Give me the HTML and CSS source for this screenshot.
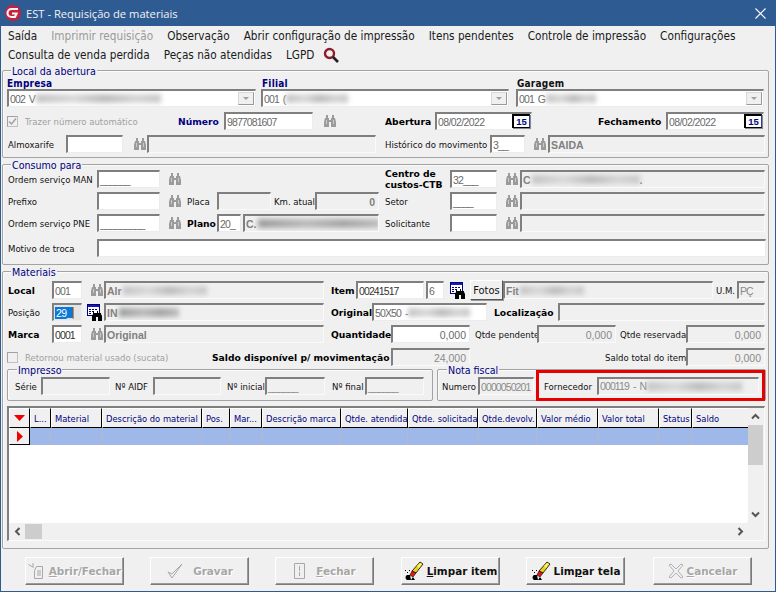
FILE: index.html
```html
<!DOCTYPE html>
<html lang="pt-BR">
<head>
<meta charset="utf-8">
<title>EST - Requisição de materiais</title>
<link rel="stylesheet" href="styles.css">
</head>
<body>
<svg class="defs" width="0" height="0">
  <symbol id="bin" viewBox="0 0 12 14">
    <path d="M2 1h2v3h1v2h2V4h1V1h2v3h1l1 4v5H7V8H5v5H0V8l1-4h1z" fill="currentColor"/>
    <path d="M2 6h1v4H2zM9 6h1v4H9z" fill="#f0f0f0" opacity=".55"/>
  </symbol>
  <symbol id="calbin" viewBox="0 0 16 17">
    <rect x=".5" y=".5" width="12" height="11" fill="#fff" stroke="#000080"/>
    <path d="M1 1h11v2H1z" fill="#1a1ab0"/>
    <path d="M2 5h2v1H2zM5 5h2v1H5zM8 5h2v1H8zM2 7h2v1H2zM5 7h2v1H5zM2 9h2v1H2z" fill="#000080"/>
    <path d="M6 7h1v2h3V7h1v2h3v1l1 2v5h-4v-4h-2v4H5v-5l1-2z" fill="#000"/>
  </symbol>
  <symbol id="eraser" viewBox="0 0 20 20">
    <path d="M12 12l7-9-3-2-8 9z" fill="#e8d020" stroke="#000" stroke-width=".8"/>
    <path d="M6 14l2-4 4 2-3 4z" fill="#e01818" stroke="#000" stroke-width=".6"/>
    <path d="M13 5l3-3 2 1-3 4z" fill="#fff36a"/>
    <path d="M3 19c-2-1-2-4 0-5h3l1 5zM7 19l2-3 2 3zM3 11h1v1H3zM5 9h1v1H5zM1 9h1v1H1z" fill="#000"/>
  </symbol>
</svg>

<div class="window">
  <header class="titlebar">
    <svg class="logo" width="18" height="18" viewBox="0 0 18 18"><circle cx="9" cy="9" r="8" fill="#c4203f"/><path d="M14 5H7.500a3.600 3.600 0 0 0 0 8H11l1.500-3.500H8" fill="none" stroke="#f3f3f3" stroke-width="2.200"/></svg>
    <span class="title-text">EST - Requisição de materiais</span>
    <svg class="close" width="11" height="11" viewBox="0 0 11 11"><path d="M.5.5l10 10M10.500.5l-10 10" stroke="#fff" stroke-width="1.100"/></svg>
  </header>

  <nav class="menu">
    <div class="menu-row">
      <span>Saída</span><span class="muted">Imprimir requisição</span><span>Observação</span><span>Abrir configuração de impressão</span><span>Itens pendentes</span><span>Controle de impressão</span><span>Configurações</span>
    </div>
    <div class="menu-row">
      <span>Consulta de venda perdida</span><span>Peças não atendidas</span><span>LGPD</span>
      <svg class="search" width="16" height="16" viewBox="0 0 16 16"><circle cx="6.500" cy="6.500" r="4.500" fill="none" stroke="#8e1c2c" stroke-width="2.400"/><path d="M10 10l5 5" stroke="#222" stroke-width="2.600"/></svg>
    </div>
  </nav>

  <section class="group g1">
    <div class="legend">Local da abertura</div>
    <div class="row-labels">
      <span class="lb-top navy w255">Empresa</span><span class="lb-top navy w255">Filial</span><span class="lb-top">Garagem</span>
    </div>
    <div class="row">
      <div class="f w249 combo"><span>002 V</span><i class="blur w125"></i><b class="arrow"></b></div>
      <div class="f w248 combo m5"><span>001 (</span><i class="blur w62"></i><b class="arrow"></b></div>
      <div class="f w248 combo m7"><span>001 G</span><i class="blur w50"></i><b class="arrow"></b></div>
    </div>
    <div class="row r5">
      <div class="check on"><svg width="9" height="9" viewBox="0 0 9 9"><path d="M1 4.500l2.500 2.500L8 1.500" fill="none" stroke="#a0a0a0" stroke-width="1.500"/></svg></div>
      <label class="l off w153 m7">Trazer número automático</label>
      <label class="l bold navy w46">Número</label>
      <div class="f w89">9877081607</div>
      <svg class="bin m11"><use href="#bin"/></svg>
      <label class="l bold w50 m49">Abertura</label>
      <div class="f w97 date">08/02/2022<span class="cal">15</span></div>
      <label class="l bold w68 m66">Fechamento</label>
      <div class="f w98 date">08/02/2022<span class="cal">15</span></div>
    </div>
    <div class="row r5">
      <label class="l w58 m1">Almoxarife</label>
      <div class="f w57"></div>
      <svg class="bin m11"><use href="#bin"/></svg>
      <div class="f ro w229 m1"></div>
      <label class="l w105 m9">Histórico do movimento</label>
      <div class="f w35">3__</div>
      <svg class="bin m9"><use href="#bin"/></svg>
      <div class="f ro w217 m2 strong">SAIDA</div>
    </div>
  </section>

  <section class="group g2">
    <div class="legend">Consumo para</div>
    <div class="row">
      <label class="l w89 m1">Ordem serviço MAN</label>
      <div class="f w63">______</div>
      <svg class="bin m9"><use href="#bin"/></svg>
      <label class="l bold two w65 m204">Centro de custos-CTB</label>
      <div class="f w47">32___</div>
      <svg class="bin m9"><use href="#bin"/></svg>
      <div class="f ro w245 m2 strong"><span>C</span><i class="blur w108"></i><span>.</span></div>
    </div>
    <div class="row r4">
      <label class="l w89 m1">Prefixo</label>
      <div class="f w63"></div>
      <svg class="bin m9"><use href="#bin"/></svg>
      <label class="l w30 m6">Placa</label>
      <div class="f ro w54"></div>
      <label class="l w41 m3">Km. atual</label>
      <div class="f ro w64 num strong">0</div>
      <label class="l w65 m6">Setor</label>
      <div class="f w47">____</div>
      <svg class="bin m9"><use href="#bin"/></svg>
      <div class="f ro w245 m2"></div>
    </div>
    <div class="row r4">
      <label class="l w89 m1">Ordem serviço PNE</label>
      <div class="f w63">_________</div>
      <svg class="bin m9"><use href="#bin"/></svg>
      <label class="l bold w30 m6">Plano</label>
      <div class="f w24">20_</div>
      <div class="f ro w136 m2 strong"><span>C.</span><i class="blur dark w122"></i></div>
      <label class="l w65 m6">Solicitante</label>
      <div class="f w47"></div>
      <svg class="bin m9"><use href="#bin"/></svg>
      <div class="f ro w245 m2"></div>
    </div>
    <div class="row r7">
      <label class="l w89 m1">Motivo de troca</label>
      <div class="f w669"></div>
    </div>
  </section>

  <section class="group g3">
    <div class="legend">Materiais</div>
    <div class="row">
      <label class="l bold w44 m1">Local</label>
      <div class="f w30">001</div>
      <svg class="bin m9"><use href="#bin"/></svg>
      <div class="f ro w220 m1 strong"><span>Alr</span><i class="blur w84"></i></div>
      <label class="l bold w25 m7">Item</label>
      <div class="f w68 dk">00241517</div>
      <div class="f w18 m2">6</div>
      <svg class="calbin m6"><use href="#calbin"/></svg>
      <button class="fotos m4">Fotos</button>
      <div class="f ro w210 strong"><span>Fit</span><i class="blur w64"></i></div>
      <label class="l w21 m3">U.M.</label>
      <div class="f ro w28">PÇ</div>
    </div>
    <div class="row r4">
      <label class="l w44 m1">Posição</label>
      <div class="f w30 focus"><span class="sel">29_</span><span class="caret"></span></div>
      <svg class="calbin m5"><use href="#calbin"/></svg>
      <div class="f ro w220 m1 strong"><span>IN</span><i class="blur dark w60"></i></div>
      <label class="l bold w41 m7">Original</label>
      <div class="f w115"><span>50X50 -</span><i class="blur w62"></i></div>
      <label class="l bold w64 m7">Localização</label>
      <div class="f ro w207"></div>
    </div>
    <div class="row r4">
      <label class="l bold w44 m1">Marca</label>
      <div class="f w30 dk">0001</div>
      <svg class="bin m9"><use href="#bin"/></svg>
      <div class="f ro w220 m1 strong">Original</div>
      <label class="l bold w60 m7">Quantidade</label>
      <div class="f w79 num">0,000</div>
      <label class="l w62 m5">Qtde pendente</label>
      <div class="f ro w79 num">0,000</div>
      <label class="l w66 m4">Qtde reservada</label>
      <div class="f ro w79 num">0,000</div>
    </div>
    <div class="row r5">
      <div class="check"></div>
      <label class="l off w187 m7">Retornou material usado (sucata)</label>
      <label class="l bold w179">Saldo disponível p/ movimentação</label>
      <div class="f ro w79 num">24,000</div>
      <label class="l w81 m135 right">Saldo total do item</label>
      <div class="f ro w79 num">0,000</div>
    </div>

    <div class="subgroups">
      <div class="group sub w426">
        <div class="legend leg-sub">Impresso</div>
        <div class="row">
          <label class="l w26 m7">Série</label>
          <div class="f ro w69"></div>
          <label class="l w38 m5">Nº AIDF</label>
          <div class="f ro w68"></div>
          <label class="l w38 m6">Nº inicial</label>
          <div class="f ro w60">______</div>
          <label class="l w33 m7">Nº final</label>
          <div class="f ro w59">______</div>
        </div>
      </div>
      <div class="group sub w329 m4">
        <div class="legend leg-sub">Nota fiscal</div>
        <div class="row">
          <label class="l w36 m4">Numero</label>
          <div class="f ro w56">0000050201</div>
          <label class="l w53 m10">Fornecedor</label>
          <div class="f ro w162 up1"><span>000119 - N</span><i class="blur w95"></i></div>
        </div>
        <div class="redbox"></div>
      </div>
    </div>

    <div class="gridbox">
      <div class="gridmain">
        <div class="cols head">
          <div class="hc ind"><svg width="11" height="6" viewBox="0 0 11 6"><path d="M0 0h11L5.500 6z" fill="#f00000"/></svg></div>
          <div class="hc">L...</div><div class="hc">Material</div><div class="hc">Descrição do material</div><div class="hc">Pos.</div><div class="hc">Mar...</div><div class="hc">Descrição marca</div><div class="hc">Qtde. atendida</div><div class="hc">Qtde. solicitada</div><div class="hc">Qtde.devolv.</div><div class="hc">Valor médio</div><div class="hc">Valor total</div><div class="hc">Status</div><div class="hc last">Saldo</div>
        </div>
        <div class="cols datarow">
          <div class="hc ind rowind"><svg width="6" height="11" viewBox="0 0 6 11"><path d="M0 0l6 5.500L0 11z" fill="#f00000"/></svg></div>
          <div class="dc"></div><div class="dc"></div><div class="dc"></div><div class="dc"></div><div class="dc"></div><div class="dc"></div><div class="dc"></div><div class="dc"></div><div class="dc"></div><div class="dc"></div><div class="dc"></div><div class="dc"></div><div class="dc nob"></div>
        </div>
        <div class="blank"></div>
        <div class="hbar">
          <svg class="chev" width="7" height="9" viewBox="0 0 7 9"><path d="M5.500 1L2 4.500 5.500 8" fill="none" stroke="#555" stroke-width="2"/></svg>
          <div class="hthumb"></div>
          <svg class="chev end" width="7" height="9" viewBox="0 0 7 9"><path d="M1.500 1L5 4.500 1.500 8" fill="none" stroke="#555" stroke-width="2"/></svg>
        </div>
      </div>
      <div class="vbar">
        <svg class="vchev" width="9" height="7" viewBox="0 0 9 7"><path d="M1 5.500L4.500 2 8 5.500" fill="none" stroke="#555" stroke-width="2"/></svg>
        <div class="vthumb"></div>
        <svg class="vchev end" width="9" height="7" viewBox="0 0 9 7"><path d="M1 1.500L4.500 5 8 1.500" fill="none" stroke="#555" stroke-width="2"/></svg>
      </div>
    </div>
  </section>

  <footer class="actions">
    <button class="btn off">
      <svg width="18" height="18" viewBox="0 0 18 18" fill="none" stroke="#a8a8a8"><path d="M8.500 4.500h6v12h-8v-8zM.5 2.500l5 3M5 1v4M9 9h4M9 11h4M9 13h4"/></svg>
      <span><u>A</u>brir/Fechar</span>
    </button>
    <button class="btn off m26">
      <svg width="18" height="18" viewBox="0 0 18 18" fill="none" stroke="#a8a8a8"><path d="M2 10l4 6L16 2 6 12z"/></svg>
      <span class="lbl-g">Gravar</span>
    </button>
    <button class="btn off m26">
      <svg width="14" height="18" viewBox="0 0 14 18" fill="none" stroke="#a8a8a8"><path d="M1.500 1.500h10v15h-10zM6.500 4v5M6.500 10v4"/></svg>
      <span class="lbl-g"><u>F</u>echar</span>
    </button>
    <button class="btn m27">
      <svg width="20" height="20"><use href="#eraser"/></svg>
      <span><u>L</u>impar item</span>
    </button>
    <button class="btn m26">
      <svg width="20" height="20"><use href="#eraser"/></svg>
      <span>Lim<u>p</u>ar tela</span>
    </button>
    <button class="btn off m28">
      <svg width="16" height="16" viewBox="0 0 16 16" fill="none" stroke="#b0b0b0"><path d="M1 2l2-1 5 5 5-5 2 1-5 6 5 6-2 1-5-5-5 5-2-1 5-6z"/></svg>
      <span><u>C</u>ancelar</span>
    </button>
  </footer>
</div>
</body>
</html>
```
FILE: styles.css
```css
* { box-sizing: border-box; }
html, body { margin: 0; padding: 0; }
body {
  width: 776px;
  height: 592px;
  overflow: hidden;
  background: #f0f0f0;
  font-family: "DejaVu Sans Condensed", "DejaVu Sans", sans-serif;
  font-size: 10px;
  color: #111;
}
.defs { position: absolute; }

.window {
  width: 776px;
  height: 592px;
  border: 1px solid #2f5b93;
  border-top: 0;
  background: #f0f0f0;
  overflow: hidden;
}

/* Title bar */
.titlebar {
  height: 26px;
  margin: 0 -1px;
  padding-left: 4px;
  display: flex;
  align-items: center;
  background: #2f5b93;
  color: #f2f2f2;
  font-family: "Open Sans", sans-serif;
  font-size: 11.200px;
}
.logo { flex: none; }
.title-text { margin-left: 4px; }
.close { margin-left: auto; margin-right: 10px; }

/* Menu */
.menu { height: 38px; font-size: 11.700px; color: #1a1a1a; }
.menu-row {
  height: 19px;
  padding-left: 7px;
  display: flex;
  align-items: center;
  gap: 14px;
  white-space: nowrap;
}
.muted { color: #9a9a9a; }
.search { margin-left: -5px; }

/* Groups */
.group {
  position: relative;
  margin-left: 1px;
  width: 767px;
  border: 1px solid #a3a3a3;
  border-radius: 2px;
  box-shadow: inset 1px 1px 0 #fbfbfb;
  padding-left: 4px;
}
.g1 { margin-top: 6px; height: 88px; padding-top: 6px; }
.g2 { margin-top: 6px; height: 101px; padding-top: 5px; }
.g3 { margin-top: 6px; height: 278px; padding-top: 9px; }
.legend {
  position: absolute;
  top: -6px;
  left: 8px;
  padding: 0 1px;
  background: #f0f0f0;
  color: #000080;
  font-size: 10.600px;
  line-height: 13px;
}
.leg-sub { left: 9px; }

.row { display: flex; align-items: center; height: 18px; }
.r4 { margin-top: 4px; }
.r5 { margin-top: 5px; }
.r7 { margin-top: 7px; }

.row-labels { display: flex; height: 12px; align-items: center; }
.lb-top { font-weight: 700; font-size: 10px; letter-spacing: .2px; white-space: nowrap; }

.l { flex: none; white-space: nowrap; font-size: 9.500px; }
.bold {
  font-family: "DejaVu Sans", sans-serif;
  font-weight: 700;
  font-size: 9.200px;
  color: #000;
}
.navy { color: #000080; }
.off { color: #a0a0a0; }
.right { text-align: right; padding-right: 3px; }
.two { white-space: normal; line-height: 11px; }

/* Fields */
.f {
  flex: none;
  height: 18px;
  padding: 0 1px;
  display: flex;
  align-items: center;
  overflow: hidden;
  white-space: pre;
  background: #fff;
  border: 1px solid #ececec;
  border-top: 2px solid #7f7f7f;
  border-left: 2px solid #7f7f7f;
  font-family: "Liberation Sans", sans-serif;
  font-size: 10.500px;
  letter-spacing: -.9px;
  word-spacing: 2px;
  color: #6a6a6a;
}
.date { letter-spacing: -.6px; }
.dk { color: #333; }
.ro { background: #f0f0f0; border-color: #7f7f7f #fafafa #fafafa #7f7f7f; color: #8a8a8a; }
.strong { font-weight: 700; letter-spacing: 0; color: #808080; font-size: 10.500px; }
.num { justify-content: flex-end; padding-right: 3px; letter-spacing: 0; }
.up1 { margin-top: -1px; }

.blur {
  display: block;
  flex: none;
  height: 9px;
  margin-left: 1px;
  background: linear-gradient(90deg, #c4c4c4, #dadada 30%, #bdbdbd 55%, #d6d6d6 80%, #c8c8c8);
  filter: blur(2.500px);
}
.blur.dark { background: linear-gradient(90deg, #9c9c9c, #bbbbbb 40%, #a6a6a6 70%, #bdbdbd); }

.combo { position: relative; }
.arrow {
  position: absolute;
  right: 1px;
  top: 1px;
  width: 16px;
  height: 13px;
  background: #f0f0f0;
  border: 1px solid #d8d8d8;
  border-right-color: #999;
  border-bottom-color: #999;
}
.arrow::after {
  content: "";
  position: absolute;
  left: 4px;
  top: 4px;
  border: 3px solid transparent;
  border-top: 3px solid #a0a0a0;
}

.date { position: relative; }
.cal {
  position: absolute;
  right: 1px;
  top: 0;
  width: 18px;
  height: 14px;
  display: flex;
  align-items: center;
  justify-content: center;
  background: #fff;
  border: 2px solid #000;
  border-right: 1px solid #3a3a90;
  border-bottom: 1px solid #000;
  box-shadow: 1px 1px 0 #888;
  color: #000080;
  font-size: 9.500px;
  font-weight: 700;
  letter-spacing: 0;
}

.check {
  flex: none;
  width: 11px;
  height: 11px;
  display: flex;
  align-items: center;
  justify-content: center;
  background: #f0f0f0;
  border: 1px solid #c0c0c0;
  border-top-color: #a0a0a0;
  border-left-color: #a0a0a0;
}

.bin { flex: none; width: 12px; height: 14px; color: #9b9b9b; }
.calbin { flex: none; width: 16px; height: 17px; }

.fotos {
  flex: none;
  width: 33px;
  height: 20px;
  padding: 0;
  background: #f0f0f0;
  border: 1px solid;
  border-color: #fff #555 #555 #fff;
  box-shadow: 1px 1px 0 #999;
  font-family: "DejaVu Sans Condensed", "DejaVu Sans", sans-serif;
  font-size: 11px;
  color: #111;
}

.focus { background: #e4e4e4; }
.sel { background: #0a78d7; color: #fff; padding: 0 1px; height: 12px; line-height: 12px; letter-spacing: -.5px; }
.caret { width: 1px; height: 12px; background: #f08020; }

/* Nested groups */
.subgroups { display: flex; margin-top: 3px; }
.sub {
  margin-left: 0;
  height: 32px;
  padding-left: 0;
  padding-top: 7px;
}
.sub.m4 { margin-left: 4px; }
.redbox {
  position: absolute;
  left: 98px;
  top: 0;
  width: 229px;
  height: 31px;
  border: 3px solid #e60000;
}

/* Data grid */
.gridbox {
  margin-top: 5px;
  width: 758px;
  height: 135px;
  display: flex;
  background: #f0f0f0;
  border: 1px solid #fafafa;
  border-top: 2px solid #7f7f7f;
  border-left: 2px solid #7f7f7f;
}
.gridmain { width: 739px; display: flex; flex-direction: column; }
.cols {
  display: grid;
  grid-template-columns: 21px 21px 51px 100px 28px 32px 79px 67px 70px 59px 61px 61px 33px 56px;
}
.head { height: 20px; background: #f0f0f0; }
.hc {
  display: flex;
  align-items: center;
  padding-left: 3px;
  overflow: hidden;
  white-space: nowrap;
  background: #f0f0f0;
  border-top: 1px solid #fff;
  border-left: 1px solid #fff;
  border-right: 1px solid #000;
  border-bottom: 1px solid #000;
  color: #000080;
  font-size: 9.300px;
}
.hc.last { border-right: 0; }
.ind { justify-content: center; padding-left: 0; }
.datarow { height: 17px; background: #9db8e9; }
.dc { border-right: 1px solid #b4b9c4; }
.dc.nob { border-right: 0; }
.rowind { border-top: 0; }
.blank { height: 78px; background: #fff; border-radius: 0 0 3px 0; }
.hbar { height: 16px; display: flex; align-items: center; background: #f0f0f0; padding-left: 5px; }
.chev { flex: none; }
.hthumb { width: 17px; height: 15px; margin-left: 4px; background: #cdcdcd; }
.chev.end { margin-left: auto; margin-right: 4px; }
.vbar { width: 15px; height: 115px; display: flex; flex-direction: column; align-items: center; padding-top: 5px; }
.vthumb { width: 15px; height: 40px; margin-top: 5px; background: #cdcdcd; }
.vchev { flex: none; }
.vchev.end { margin-top: auto; margin-bottom: 5px; }

/* Footer buttons */
.actions { display: flex; padding: 8px 0 0 24px; }
.btn {
  flex: none;
  width: 99px;
  height: 28px;
  padding: 0;
  display: flex;
  align-items: center;
  justify-content: center;
  gap: 3px;
  background: #f0f0f0;
  border: 1px solid;
  border-color: #fff #7a7a7a #7a7a7a #fff;
  box-shadow: inset -1px -1px 0 #9a9a9a;
  font-family: "DejaVu Sans", sans-serif;
  font-weight: 700;
  font-size: 10.400px;
  white-space: nowrap;
  color: #111;
}
.btn.off { color: #a6a6a6; text-shadow: 1px 1px 0 #fff; }
.lbl-g { margin-left: 6px; }
.m26 { margin-left: 26px; }
.m27 { margin-left: 27px; }
.m28 { margin-left: 28px; }

/* Offsets */
.m1 { margin-left: 1px; }
.m2 { margin-left: 2px; }
.m3 { margin-left: 3px; }
.m4 { margin-left: 4px; }
.m5 { margin-left: 5px; }
.m6 { margin-left: 6px; }
.m7 { margin-left: 7px; }
.m9 { margin-left: 9px; }
.m10 { margin-left: 10px; }
.m11 { margin-left: 11px; }
.m49 { margin-left: 49px; }
.m66 { margin-left: 66px; }
.m135 { margin-left: 135px; }
.m204 { margin-left: 204px; }

/* Widths */
.w18 { width: 18px; } .w21 { width: 21px; } .w24 { width: 24px; } .w25 { width: 25px; }
.w26 { width: 26px; } .w28 { width: 28px; } .w30 { width: 30px; } .w33 { width: 33px; }
.w35 { width: 35px; } .w36 { width: 36px; } .w38 { width: 38px; } .w41 { width: 41px; }
.w44 { width: 44px; } .w46 { width: 46px; } .w47 { width: 47px; } .w50 { width: 50px; }
.w53 { width: 53px; } .w54 { width: 54px; } .w56 { width: 56px; } .w57 { width: 57px; }
.w58 { width: 58px; } .w59 { width: 59px; } .w60 { width: 60px; } .w62 { width: 62px; }
.w63 { width: 63px; } .w64 { width: 64px; } .w65 { width: 65px; } .w66 { width: 66px; }
.w68 { width: 68px; } .w69 { width: 69px; } .w79 { width: 79px; } .w81 { width: 81px; }
.w84 { width: 84px; } .w89 { width: 89px; } .w95 { width: 95px; } .w97 { width: 97px; }
.w98 { width: 98px; } .w105 { width: 105px; } .w108 { width: 108px; } .w115 { width: 115px; }
.w122 { width: 122px; } .w125 { width: 125px; } .w136 { width: 136px; } .w153 { width: 153px; }
.w162 { width: 162px; } .w179 { width: 179px; } .w187 { width: 187px; } .w207 { width: 207px; }
.w210 { width: 210px; } .w217 { width: 217px; } .w220 { width: 220px; } .w229 { width: 229px; }
.w245 { width: 245px; } .w248 { width: 248px; } .w249 { width: 249px; } .w255 { width: 255px; }
.w329 { width: 329px; } .w426 { width: 426px; } .w669 { width: 669px; }
```
